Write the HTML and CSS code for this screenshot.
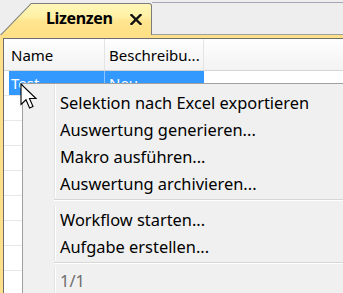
FILE: index.html
```html
<!DOCTYPE html>
<html lang="de">
<head>
<meta charset="utf-8">
<link rel="stylesheet" href="styles.css">
</head>
<body>
<div class="tabstrip">
  <div class="tab">
    <div class="tab-face">
      <span class="tab-label">Lizenzen</span>
      <svg class="tab-close" width="12" height="11" viewBox="0 0 12 11"><path d="M1.5 1 L10.5 10 M10.5 1 L1.5 10" stroke="#111" stroke-width="2.4" stroke-linecap="square"/></svg>
    </div>
  </div>
  <div class="tab-rest"></div>
</div>
<div class="panel">
  <div class="inner">
    <div class="grid">
      <div class="hdr">
        <div class="c c1">Name</div>
        <div class="c c2">Beschreibu...</div>
        <div class="c c3"></div>
      </div>
      <div class="row selected">
        <div class="c c1">Test</div>
        <div class="c c2">Neu</div>
        <div class="c c3"></div>
      </div>
      <div class="row"><div class="c c1"></div><div class="c c2"></div><div class="c c3"></div></div>
      <div class="row"><div class="c c1"></div><div class="c c2"></div><div class="c c3"></div></div>
      <div class="row"><div class="c c1"></div><div class="c c2"></div><div class="c c3"></div></div>
      <div class="row"><div class="c c1"></div><div class="c c2"></div><div class="c c3"></div></div>
      <div class="row"><div class="c c1"></div><div class="c c2"></div><div class="c c3"></div></div>
      <div class="row"><div class="c c1"></div><div class="c c2"></div><div class="c c3"></div></div>
      <div class="row"><div class="c c1"></div><div class="c c2"></div><div class="c c3"></div></div>
    </div>
  </div>
</div>
<div class="menu">
  <div class="item">Selektion nach Excel exportieren</div>
  <div class="item">Auswertung generieren...</div>
  <div class="item">Makro ausführen...</div>
  <div class="item">Auswertung archivieren...</div>
  <div class="sep"></div>
  <div class="item">Workflow starten...</div>
  <div class="item">Aufgabe erstellen...</div>
  <div class="sep sep2"></div>
  <div class="item disabled">1/1</div>
</div>
<svg class="cursor" width="19" height="27" viewBox="0 0 19 27">
  <path d="M1 1 L1 21.5 L6 16.8 L9.6 25 L13 23.5 L9.5 15.5 L16 15.5 Z" fill="#fff" stroke="#000" stroke-width="1.1" stroke-linejoin="miter"/>
</svg>
</body>
</html>
```
FILE: styles.css
```css
html, body {
  margin: 0;
  padding: 0;
}
body {
  width: 343px;
  height: 293px;
  overflow: hidden;
  background: #eeeeee;
  font-family: "Noto Sans", "Open Sans", sans-serif;
  font-size: 15px;
  color: #000;
  position: relative;
}
.tabstrip {
  display: flex;
  height: 35px;
}
.tab {
  margin-top: 3px;
  width: 152px;
  height: 32px;
  box-sizing: border-box;
  padding: 1px 1px 0 0;
  background: #7c7c7c;
  border-top-right-radius: 3px;
  clip-path: polygon(0 100%, 31px 0, 100% 0, 100% 100%);
}
.tab-face {
  height: 100%;
  border-top-right-radius: 2px;
  background: linear-gradient(#fff6b8 0%, #fff1a6 40%, #ffe590 55%, #ffe085 100%);
  clip-path: polygon(1.4px 100%, 31.4px 0, 100% 0, 100% 100%);
  display: flex;
  align-items: center;
  padding-left: 46px;
  box-sizing: border-box;
}
.tab-label {
  font-weight: 700;
  font-size: 16px;
  letter-spacing: -0.35px;
  margin-top: -3px;
}
.tab-close {
  margin-left: 17px;
}
.tab-rest {
  flex: 1;
  margin-top: 2px;
  border-top: 1px solid #a6a6b6;
  border-bottom: 1px solid #a0a0a0;
}
.panel {
  background: #ffe08a;
  padding: 3px 0 0 3px;
  height: 258px;
  box-sizing: border-box;
  overflow: hidden;
}
.inner {
  background: #fff;
  border-top: 1px solid #6e6e6e;
  border-left: 1px solid #6e6e6e;
  height: 100%;
  box-sizing: border-box;
  overflow: hidden;
}
.grid {
  display: flex;
  flex-direction: column;
}
.hdr, .row {
  display: flex;
}
.hdr {
  height: 31px;
  border-bottom: 1px solid #d5d5d5;
  background: linear-gradient(#ffffff 0%, #fbfbfb 30%, #f3f3f3 100%);
}
.row {
  height: 24px;
  border-bottom: 1px solid #e8e8e8;
}
.c {
  display: flex;
  align-items: center;
  box-sizing: border-box;
  border-right: 1px solid #e4e4e4;
  white-space: nowrap;
  overflow: hidden;
}
.c1 {
  width: 101px;
  padding-left: 7px;
}
.c2 {
  width: 99px;
  padding-left: 4px;
}
.c3 {
  flex: 1;
  border-right: none;
}
.selected .c1 {
  background: linear-gradient(to right, #fff 5px, #3399ff 5px);
  color: #fff;
  border-right-color: #8cc4ff;
}
.selected .c2 {
  background: #3399ff;
  color: #fff;
  border-right-color: #3399ff;
}
.menu {
  position: absolute;
  left: 22px;
  top: 83px;
  width: 321px;
  height: 210px;
  box-sizing: border-box;
  overflow: hidden;
  border-top: 1px solid #a0a0a0;
  border-left: 1px solid #a0a0a0;
  padding-top: 5px;
  font-size: 16.4px;
  background: linear-gradient(to right, #f0f0f0 31px, #e2e3e3 31px, #e2e3e3 32px, #ffffff 32px, #ffffff 33px, #f0f0f0 33px);
}
.item {
  height: 27px;
  line-height: 27px;
  padding-left: 37px;
  white-space: nowrap;
}
.disabled {
  color: #6d6d6d;
}
.sep {
  height: 9px;
  margin-left: 31px;
  box-sizing: border-box;
  background: linear-gradient(#f0f0f0 2px, #d7d7d7 2px, #d7d7d7 3px, #ffffff 3px, #ffffff 4px, #f0f0f0 4px);
}
.sep2 {
  height: 7px;
}
.cursor {
  position: absolute;
  left: 20px;
  top: 83px;
}
```
